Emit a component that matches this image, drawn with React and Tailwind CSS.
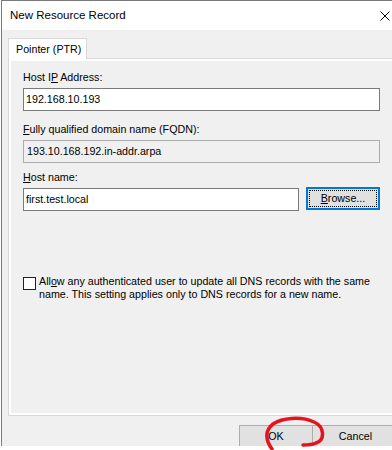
export default function App() {
  return (
    <div className="relative w-[392px] h-[450px] overflow-hidden bg-white text-[10.7px] leading-[13px] text-black font-['Liberation_Sans',Arial,sans-serif]">
      {/* dialog window */}
      <div className="ml-[1px] w-[407px] h-[446px] overflow-hidden border-l border-t border-[#7a7a7a] flex flex-col bg-[#f0f0f0]">
        {/* title bar */}
        <div className="h-[29px] shrink-0 bg-white flex items-center justify-between">
          <span className="pl-[8px] text-[11.5px]">New Resource Record</span>
          <div className="w-[46px] h-full flex items-center justify-center">
            <svg width="10" height="10" viewBox="0 0 10 10">
              <path d="M0.5 0.5 L9.5 9.5 M9.5 0.5 L0.5 9.5" stroke="#000" strokeWidth="1" fill="none" />
            </svg>
          </div>
        </div>

        {/* body */}
        <div className="flex-1 pt-[8px] pl-[6px]">
          {/* tab header */}
          <div className="relative z-10 -mb-px w-[79px] h-[21px] bg-white border border-b-0 border-[#d9d9d9] flex items-center pl-[7px] whitespace-nowrap">
            Pointer (PTR)
          </div>

          {/* tab panel */}
          <div className="w-[394px] h-[358px] border border-[#d9d9d9]">
            <div className="h-full border-2 border-white bg-[#f0f0f0] pl-[12px] pt-[10px]">
              <div>
                Host I<span className="underline">P</span> Address:
              </div>
              <div className="mt-[4px] w-[357px] h-[23px] bg-white border border-[#7a7a7a] flex items-center pl-[2px]">
                192.168.10.193
              </div>

              <div className="mt-[12px]">
                <span className="underline">F</span>ully qualified domain name (FQDN):
              </div>
              <div className="mt-[4px] w-[357px] h-[23px] bg-[#f0f0f0] border border-[#adadad] flex items-center pl-[3px]">
                193.10.168.192.in-addr.arpa
              </div>

              <div className="mt-[8px]">
                <span className="underline">H</span>ost name:
              </div>
              <div className="mt-[4px] flex items-start">
                <div className="w-[276px] h-[23px] bg-white border border-[#7a7a7a] flex items-center pl-[2px]">
                  first.test.local
                </div>
                <div className="ml-[7px] -mt-px w-[74px] h-[23px] border-2 border-[#0078d7] bg-[#e1e1e1] p-[1px]">
                  <div className="w-full h-full border border-dotted border-black flex items-center justify-center">
                    <span>
                      <span className="underline">B</span>rowse...
                    </span>
                  </div>
                </div>
              </div>

              <div className="mt-[64px] flex items-start">
                <div className="mt-[2px] w-[13px] h-[13px] shrink-0 bg-white border border-[#222222]" />
                <div className="ml-[3px] w-[336px]">
                  All<span className="underline">o</span>w any authenticated user to update all DNS records with the same name. This setting applies only to DNS records for a new name.
                </div>
              </div>
            </div>
          </div>

          {/* buttons */}
          <div className="mt-[9px] ml-[231px] flex">
            <div className="w-[74px] h-[23px] bg-[#e1e1e1] border border-[#adadad] flex items-center justify-center">
              OK
            </div>
            <div className="-ml-px w-[87px] h-[23px] bg-[#e1e1e1] border border-[#adadad] flex items-center justify-center">
              Cancel
            </div>
          </div>
        </div>
      </div>

      {/* red annotation around OK */}
      <svg className="absolute left-0 top-0 pointer-events-none" width="392" height="450" viewBox="0 0 392 450">
        <path
          d="M272 449 C 266 441, 264 431, 273 424 C 282 418, 301 416, 314 422 C 325 427, 325 440, 316 443 C 312 445, 307 445, 303 445"
          stroke="#e3141c"
          strokeWidth="3.5"
          strokeLinecap="round"
          fill="none"
        />
      </svg>
    </div>
  )
}
